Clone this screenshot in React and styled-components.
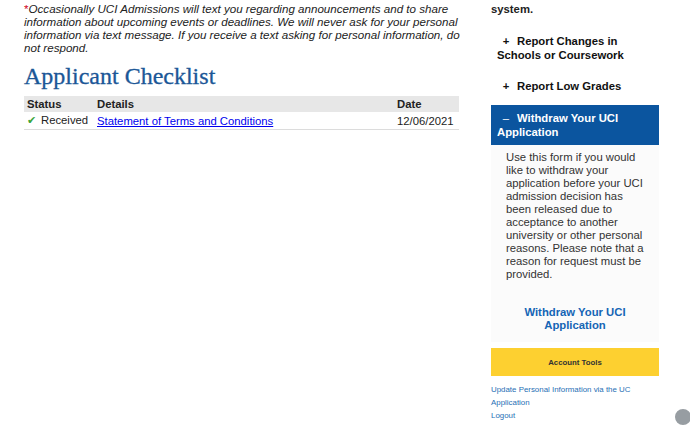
import React from 'react';
import styled, { createGlobalStyle } from 'styled-components';

const Global = createGlobalStyle`
    body {
        margin: 0;
        background: #fff;
        font-family: "Liberation Sans", Arial, sans-serif;
        color: #222;
    }
`

const Page = styled.div`
    display: flex;
    align-items: flex-start;
    gap: 32px;
    padding-left: 24px;
    height: 429px;
    overflow: hidden;
    position: relative;
`

const Main = styled.div`
    width: 435px;
`

const Notice = styled.p`
    margin: 2px 0 0;
    font-size: 11.6px;
    line-height: 13px;
    font-style: italic;
    color: #222;
    white-space: nowrap;
`

const Star = styled.span`
    color: #d0021b;
    font-style: normal;
`

const Title = styled.h1`
    margin: 8px 0 6px;
    font-family: "Liberation Serif", "Times New Roman", serif;
    font-weight: normal;
    font-size: 24px;
    line-height: 28px;
    color: #1b5797;
    -webkit-text-stroke: 0.3px #1b5797;
`

const Table = styled.table`
    width: 100%;
    border-collapse: collapse;
    font-size: 11.3px;
`

const Th = styled.th`
    background: #e7e7e7;
    text-align: left;
    font-weight: bold;
    padding: 1px 3px;
    height: 14px;
    width: ${p => p.w || 'auto'};
`

const Td = styled.td`
    padding: 2px 3px;
    height: 13px;
    border-bottom: 1px solid #dcdcdc;
    white-space: nowrap;
`

const Check = styled.span`
    color: #3aa53a;
    font-size: 11px;
    margin-right: 5px;
`

const DocLink = styled.a`
    color: #0000ee;
    text-decoration: underline;
`

const Side = styled.div`
    width: 168px;
    font-size: 11.3px;
`

const Tail = styled.p`
    margin: 3px 0 0;
    font-weight: bold;
    line-height: 12px;
    color: #222;
`

const Accordion = styled.div`
    margin-top: 13px;
    display: flex;
    flex-direction: column;
    gap: 5px;
`

const Item = styled.div`
    padding: 6px 6px;
    margin-top: ${p => (p.open ? '1px' : '0')};
    line-height: 14px;
    font-weight: bold;
    background: ${p => (p.open ? '#0b559f' : '#fff')};
    color: ${p => (p.open ? '#fff' : '#111')};
`

const Sign = styled.span`
    display: inline-block;
    width: 10px;
    text-align: center;
    margin-left: 4px;
    margin-right: 6px;
    font-weight: ${p => (p.minus ? 'normal' : 'bold')};
`

const Panel = styled.div`
    margin-top: -5px;
    background: #fbfbfb;
    padding: 6px 10px 10px 15px;
    color: #333;
`

const PanelText = styled.p`
    margin: 0;
    line-height: 13px;
    white-space: nowrap;
`

const WithdrawLink = styled.a`
    display: block;
    margin-top: 25px;
    margin-right: 5px;
    text-align: center;
    font-weight: bold;
    color: #1565b5;
    line-height: 13px;
    text-decoration: none;
`

const ToolsBar = styled.div`
    margin-top: 6px;
    height: 28px;
    background: #fdd030;
    display: flex;
    align-items: center;
    justify-content: center;
    font-size: 7.8px;
    font-weight: bold;
    color: #333;
`

const Links = styled.div`
    margin-top: 7px;
    font-size: 7.9px;
    line-height: 13px;
`

const SmallLink = styled.a`
    display: block;
    color: #1f6fb5;
    text-decoration: none;
`

const Dot = styled.div`
    position: absolute;
    right: -1px;
    top: 409px;
    width: 16px;
    height: 16px;
    border-radius: 50%;
    background: #979da2;
`

const panelLines = [
    'Use this form if you would',
    'like to withdraw your',
    'application before your UCI',
    'admission decision has',
    'been released due to',
    'acceptance to another',
    'university or other personal',
    'reasons. Please note that a',
    'reason for request must be',
    'provided.',
]

export default function App() {
    return (
        <Page>
            <Global />
            <Main>
                <Notice>
                    <Star>*</Star>Occasionally UCI Admissions will text you regarding announcements and to share<br />
                    information about upcoming events or deadlines. We will never ask for your personal<br />
                    information via text message. If you receive a text asking for personal information, do<br />
                    not respond.
                </Notice>
                <Title>Applicant Checklist</Title>
                <Table>
                    <thead>
                        <tr>
                            <Th w="64px">Status</Th>
                            <Th>Details</Th>
                            <Th w="59px">Date</Th>
                        </tr>
                    </thead>
                    <tbody>
                        <tr>
                            <Td><Check>✔</Check>Received</Td>
                            <Td><DocLink href="#">Statement of Terms and Conditions</DocLink></Td>
                            <Td>12/06/2021</Td>
                        </tr>
                    </tbody>
                </Table>
            </Main>
            <Side>
                <Tail>system.</Tail>
                <Accordion>
                    <Item><Sign>+</Sign>Report Changes in<br />Schools or Coursework</Item>
                    <Item><Sign>+</Sign>Report Low Grades</Item>
                    <Item open><Sign minus>–</Sign>Withdraw Your UCI<br />Application</Item>
                    <Panel>
                        <PanelText>
                            {panelLines.map((line, i) => (
                                <React.Fragment key={i}>{line}{i < panelLines.length - 1 && <br />}</React.Fragment>
                            ))}
                        </PanelText>
                        <WithdrawLink href="#">Withdraw Your UCI<br />Application</WithdrawLink>
                    </Panel>
                </Accordion>
                <ToolsBar>Account Tools</ToolsBar>
                <Links>
                    <SmallLink href="#">Update Personal Information via the UC<br />Application</SmallLink>
                    <SmallLink href="#">Logout</SmallLink>
                </Links>
            </Side>
            <Dot />
        </Page>
    )
}
